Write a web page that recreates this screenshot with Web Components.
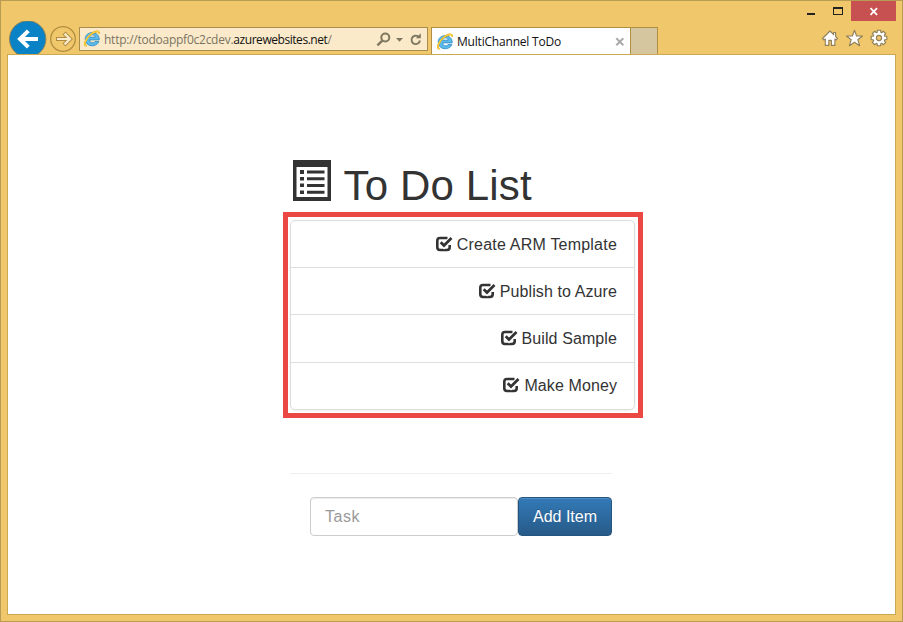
<!DOCTYPE html>
<html lang="en"><head><meta charset="utf-8"><title>MultiChannel ToDo</title>
<style>html,body{margin:0;height:100%;overflow:hidden}</style></head>
<body>
<browser-window>
  <window-controls slot="controls"></window-controls>
  <nav-bar slot="nav">
    <address-bar><span slot="pre">http://todoappf0c2cdev.</span><b slot="host">azurewebsites.net</b><span slot="post">/</span></address-bar>
    <browser-tab>MultiChannel ToDo</browser-tab>
  </nav-bar>
  <todo-page>
    <todo-item>Create ARM Template</todo-item>
    <todo-item>Publish to Azure</todo-item>
    <todo-item>Build Sample</todo-item>
    <todo-item>Make Money</todo-item>
  </todo-page>
</browser-window>
<script>
const define = (name, html) => customElements.define(name, class extends HTMLElement {
  constructor() {
    super();
    const t = document.createElement('template');
    t.innerHTML = html;
    this.attachShadow({mode: 'open'}).append(t.content.cloneNode(true));
  }
});

/* Gear outline: eight square teeth on a circular body with a round hole. */
function gearPath(cx, cy) {
  const pts = [];
  for (let i = 0; i < 8; i++) for (const [o, r] of [[-.3, 6], [-.22, 8], [.22, 8], [.3, 6]]) {
    const a = i * Math.PI / 4 + o;
    pts.push((cx + r * Math.cos(a)).toFixed(2) + ' ' + (cy + r * Math.sin(a)).toFixed(2));
  }
  return 'M' + pts.join('L') + `ZM${cx + 2.6} ${cy}a2.6 2.6 0 1 0-5.2 0a2.6 2.6 0 1 0 5.2 0Z`;
}

define('browser-window', `<style>
:host{display:grid;box-sizing:border-box;width:903px;height:622px;grid-template-rows:20px 33px 561px;background:#f0c76a;border:1px solid #b89c53;padding:0 6px}
main{box-sizing:border-box;background:#fff;border:1px solid #cba852;min-width:0}
</style><slot name="controls"></slot><slot name="nav"></slot><main><slot></slot></main>`);

define('window-controls', `<style>
:host{display:flex;justify-content:flex-end}
svg{display:block}
.c{background:#c75050}
</style>
<svg width="50" height="20" shape-rendering="crispEdges"><path d="M6 12h8v2H6z" fill="#222"/><path d="M32 6h10v8H32zM33 8v5h8V8z" fill="#222" fill-rule="evenodd"/></svg>
<svg class="c" width="45" height="20"><path d="M19.5 7.200l6.600 6.600M26.100 7.200l-6.600 6.600" stroke="#fff" stroke-width="1.8"/></svg>`);

define('nav-bar', `<style>
:host{display:flex;min-width:0;overflow:hidden}
svg{display:block;flex:none}
.new{box-sizing:border-box;width:27px;height:27px;margin-top:6px;background:#d5c69f;border:1px solid #b08f45;border-width:1px 1px 0 0}
.tools{margin-left:auto}
</style>
<svg width="72" height="33" viewBox="0 0 72 33">
<circle cx="20.700" cy="18" r="18.200" fill="#0a83c6" stroke="#8b8357"/>
<path d="M31 18H13M21.300 9.800L13 18l8.300 8.200" fill="none" stroke="#fff" stroke-width="4"/>
<circle cx="56" cy="18" r="12.300" fill="none" stroke="#b18d43" stroke-width="1.300"/>
<path d="M49 18H62M57 12l6 6-6 6" fill="none" stroke="#b18d43" stroke-width="4.200"/>
<path d="M50 18H61.500M57.600 12.600l5.400 5.400-5.400 5.400" fill="none" stroke="#faebcc" stroke-width="2.200"/></svg>
<slot></slot><div class="new"></div>
<svg class="tools" width="76" height="33" viewBox="820 21 76 33" fill="#fff" stroke="#8d7f5a" stroke-width="1.100" stroke-linejoin="round">
<path d="M830 31L822.500 38.500l1.500 1.500 1.300-1v6.400h3.500v-5h2.600v5h3.500v-6.400l1.300 1L837.500 38.500 835.600 36.600V32.500h-2v2.200z"/>
<path d="M854.500 30.300l2.100 5.700h5.900l-4.700 3.700 1.800 6-5.100-3.500-5.100 3.500 1.800-6-4.700-3.700h5.900z"/>
<path d="${gearPath(879, 38)}" fill-rule="evenodd"/></svg>`);

define('ie-logo', `<style>:host{display:block;flex:none;width:18px;height:18px}svg{display:block}</style>
<svg width="18" height="18" viewBox="0 0 18 18"><path d="M16.200 9.900H6.600C6.800 13.400 11 13.500 12 11.600h3.900C13.700 17.700 2.200 17.300 2.200 9 2.200.300 16.800.500 16.200 9.900ZM6.600 7.200H12.100C12.100 4 6.800 4.100 6.600 7.200Z" fill="#5cbbea" stroke="#2a86c2" stroke-width=".8" fill-rule="evenodd"/>
<path d="M3.700 15.600C-.3 16 2.500 8.700 7.700 4.400 11.200 1.500 16.800-.2 15.900 3.700" fill="none" stroke="#dba81f" stroke-width="1.800"/>
<path d="M3.700 15.600C-.3 16 2.500 8.700 7.700 4.400 11.200 1.500 16.800-.2 15.900 3.700" fill="none" stroke="#fdd33c" stroke-width="1.200"/></svg>`);

define('address-bar', `<style>
:host{display:flex;box-sizing:border-box;flex:none;width:349px;height:24px;margin:6px 3px 0 0;border:1px solid #a98d4c;background:#faeaca;align-items:center;padding-left:3px;font:12px/22px "Open Sans","Noto Sans",sans-serif;color:#7b7462;white-space:nowrap}
.u{margin-left:3px;padding-top:2px;width:228px;display:block;letter-spacing:-.34px}
::slotted([slot=pre]){letter-spacing:-.25px}
::slotted(b){font-weight:400;color:#111;letter-spacing:-.45px}
.i{margin-left:auto}
</style><ie-logo></ie-logo><span class="u"><slot name="pre"></slot><slot name="host"></slot><slot name="post"></slot></span>
<svg class="i" width="54" height="22" viewBox="373 28 54 22" fill="none" stroke="#7f775f"><circle cx="385.300" cy="37.500" r="4" stroke-width="2"/><path d="M382.300 40.700L377.400 45.300" stroke-width="2.400"/><path d="M396 38h7l-3.500 3.800z" fill="#7f775f" stroke="none"/><path d="M418.500 36.700A4.200 4.200 0 1 0 419.900 40.500" stroke-width="1.900"/><path d="M420.800 33.200v5.100h-5z" fill="#7f775f" stroke="none"/></svg>`);

define('browser-tab', `<style>
:host{display:flex;box-sizing:border-box;flex:none;width:200px;height:27px;margin-top:6px;border:1px solid #b08f45;border-bottom:0;background:#fff;align-items:center;padding:1px 0 0 4px;font:12px/20px "Open Sans","Noto Sans",sans-serif;color:#111;white-space:nowrap}
.t{margin-left:3px;letter-spacing:-.2px}svg{margin-left:auto}
</style><ie-logo></ie-logo><span class="t"><slot></slot></span><svg width="16" height="18"><path d="M2.300 5.300l7 7M9.300 5.300l-7 7" stroke="#aaa" stroke-width="2"/></svg>`);

define('todo-page', `<style>
:host{display:block;padding:105px 0 0 275px;font:16px/22px "Liberation Sans",Arial,sans-serif;color:#333}
h1{display:flex;align-items:flex-start;height:52px;margin:0;padding-left:10px;font-size:42px;line-height:48px;font-weight:400}
h1 span{margin-left:11.500px;margin-top:2px;letter-spacing:.15px;white-space:nowrap}
svg{display:block}
.mark{box-sizing:border-box;width:360px;height:206px;border:5px solid #eb4844;padding:3px 2px}
.list{display:grid;grid-template-rows:47px 47px 48px 46px;box-sizing:border-box;width:345px;height:190px;border:1px solid #ddd;border-radius:5px;box-shadow:0 1px 2px rgba(0,0,0,.075)}
hr{width:322px;height:1px;border:0;background:#eee;margin:55px 0 23px 7px}
form{display:flex;margin-left:27px}
input,button{box-sizing:border-box;height:39px;font:16px "Liberation Sans",Arial,sans-serif;border-radius:4px;margin:0}
input{width:208px;border:1px solid #ccc;padding:0 14px;letter-spacing:.5px;box-shadow:inset 0 1px 1px rgba(0,0,0,.075)}
input::placeholder{color:#999;opacity:1}
button{width:94px;padding:0;color:#fff;border:1px solid #245580;background:linear-gradient(#337ab7,#265a88);text-shadow:0 -1px 0 rgba(0,0,0,.2);box-shadow:inset 0 1px 0 rgba(255,255,255,.15);white-space:nowrap}
</style>
<h1><svg width="39" height="41"><path d="M0 0h38v41H0zM3.500 7v30h31V7z" fill="#333" fill-rule="evenodd"/><path d="M7 10h4v4H7zM7 17h4v3.500H7zM7 23.500h4V27H7zM7 30.500h4V34H7zM14 10.500h17.500v3H14zM14 17.300h17.500v3H14zM14 24h17.500v3H14zM14 30.800h17.500v3H14z" fill="#333"/></svg><span>To Do List</span></h1>
<div class="mark"><div class="list"><slot></slot></div></div><hr>
<form><input placeholder="Task" aria-label="Task"><button type="button">Add Item</button></form>`);

define('todo-item', `<style>
:host{display:flex;box-sizing:border-box;border-bottom:1px solid #ddd;padding:1px 17px 0 0;align-items:center;justify-content:flex-end;gap:4px;white-space:nowrap;letter-spacing:.1px}
:host(:first-of-type){letter-spacing:.21px}
:host(:last-of-type){border:0;padding-top:0}
svg{display:block;margin-top:-2px}
</style><svg width="17" height="16" viewBox="0 0 17 16"><path d="M11.500 2H4Q1.300 2 1.300 4.700V11.300Q1.300 14 4 14H11Q13.700 14 13.700 11.300V9" fill="none" stroke="#333" stroke-width="2.600"/><path d="M4.800 7.300L8 10.300 15.500 2" fill="none" stroke="#fff" stroke-width="4.500"/><path d="M4.700 6.200L8 9.500 15.500 2" fill="none" stroke="#333" stroke-width="2.700"/></svg><span><slot></slot></span>`);
</script>
</body></html>
